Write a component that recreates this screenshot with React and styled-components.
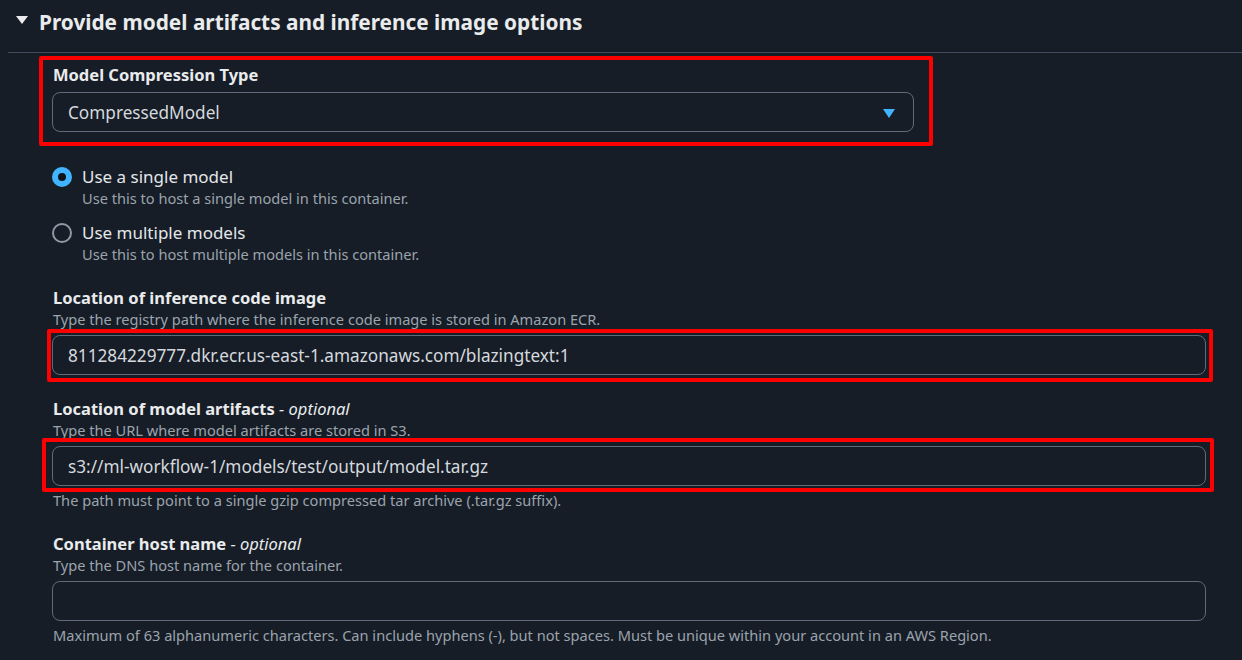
import React from "react";
import styled, { createGlobalStyle } from "styled-components";

const GlobalStyle = createGlobalStyle`
  body {
    margin: 0;
    background: #161d26;
    font-family: "Noto Sans", "Open Sans", sans-serif;
    color: #d1d5db;
  }
`;

const Page = styled.div`
  width: 1242px;
  height: 660px;
  overflow: hidden;
  background: #161d26;
`;

const Header = styled.div`
  display: flex;
  align-items: center;
  margin-left: 8px;
  padding: 8px 0 16px 8px;
  border-bottom: 1px solid #414d5c;
`;

const Caret = styled.span`
  width: 0;
  height: 0;
  margin: -4px 11px 0 0;
  border-left: 6px solid transparent;
  border-right: 6px solid transparent;
  border-top: 8px solid #e9ebed;
`;

const Title = styled.h2`
  margin: 0;
  font-size: 20.8px;
  line-height: 28px;
  font-weight: 700;
  color: #e9ebed;
`;

const Body = styled.div`
  display: flex;
  flex-direction: column;
  gap: 23px;
  width: 1154px;
  padding: 11px 0 0 52px;
`;

const Field = styled.div`
  position: relative;
  display: flex;
  flex-direction: column;
  width: ${(p) => p.$width || "100%"};
`;

const Label = styled.label`
  font-size: 16.5px;
  line-height: 22px;
  font-weight: 700;
  color: #e9ebed;
  padding-left: 1px;

  em {
    font-weight: 400;
    font-style: italic;
  }
`;

const Description = styled.div`
  font-size: 14.6px;
  line-height: 20px;
  color: #9ba3ad;
  padding-left: 1px;
`;

const Help = styled(Description)`
  margin-top: 4px;
`;

const Control = styled.div`
  position: relative;
  margin-top: 6px;
`;

const Input = styled.div`
  box-sizing: border-box;
  height: 40px;
  display: flex;
  align-items: center;
  justify-content: space-between;
  padding: 0 18px 0 15px;
  border: 1px solid #5f6b7a;
  border-radius: 8px;
  background: #161d26;
  font-size: 17.2px;
  color: #d5d9de;
`;

const SelectArrow = styled.span`
  width: 0;
  height: 0;
  margin-top: 2px;
  border-left: 6px solid transparent;
  border-right: 6px solid transparent;
  border-top: 9px solid #42b4ff;
`;

const Mark = styled.div`
  position: absolute;
  top: ${(p) => p.$t}px;
  left: ${(p) => p.$l}px;
  right: ${(p) => p.$r}px;
  bottom: ${(p) => p.$b}px;
  border: 4px solid #ff0000;
  border-radius: 2px;
  pointer-events: none;
`;

const RadioGroup = styled.div`
  display: flex;
  flex-direction: column;
  gap: 14px;
  margin-top: 34px;
`;

const RadioItem = styled.div`
  display: grid;
  grid-template-columns: 20px 1fr;
  column-gap: 10px;
  align-items: center;
`;

const RadioDot = styled.span`
  box-sizing: border-box;
  width: 20px;
  height: 20px;
  border-radius: 50%;
  border: ${(p) => (p.$checked ? "6px solid #42b4ff" : "2px solid #8d99a8")};
  background: ${(p) => (p.$checked ? "#0f141a" : "transparent")};
`;

const RadioLabel = styled.span`
  font-size: 17px;
  line-height: 22px;
  color: #e3e6ea;
`;

const RadioDescription = styled(Description)`
  grid-column: 2;
  padding-left: 0;
`;

function Radio({ checked, label, description }) {
  return (
    <RadioItem>
      <RadioDot $checked={checked} />
      <RadioLabel>{label}</RadioLabel>
      <RadioDescription>{description}</RadioDescription>
    </RadioItem>
  );
}

export default function App() {
  return (
    <Page>
      <GlobalStyle />
      <Header>
        <Caret />
        <Title>Provide model artifacts and inference image options</Title>
      </Header>
      <Body>
        <div>
          <Field $width="862px">
            <Label>Model Compression Type</Label>
            <Control>
              <Input>
                CompressedModel
                <SelectArrow />
              </Input>
            </Control>
            <Mark $t={-8} $l={-13} $r={-19} $b={-14} />
          </Field>
          <RadioGroup>
            <Radio
              checked
              label="Use a single model"
              description="Use this to host a single model in this container."
            />
            <Radio
              label="Use multiple models"
              description="Use this to host multiple models in this container."
            />
          </RadioGroup>
        </div>

        <Field>
          <Label>Location of inference code image</Label>
          <Description>
            Type the registry path where the inference code image is stored in Amazon ECR.
          </Description>
          <Control>
            <Input>811284229777.dkr.ecr.us-east-1.amazonaws.com/blazingtext:1</Input>
            <Mark $t={-6} $l={-5} $r={-7} $b={-7} />
          </Control>
        </Field>

        <Field>
          <Label>
            Location of model artifacts <em>- optional</em>
          </Label>
          <Description>Type the URL where model artifacts are stored in S3.</Description>
          <Control>
            <Input>s3://ml-workflow-1/models/test/output/model.tar.gz</Input>
            <Mark $t={-8} $l={-10} $r={-8} $b={-6} />
          </Control>
          <Help>The path must point to a single gzip compressed tar archive (.tar.gz suffix).</Help>
        </Field>

        <Field>
          <Label>
            Container host name <em>- optional</em>
          </Label>
          <Description>Type the DNS host name for the container.</Description>
          <Control>
            <Input />
          </Control>
          <Help>
            Maximum of 63 alphanumeric characters. Can include hyphens (-), but not spaces. Must be
            unique within your account in an AWS Region.
          </Help>
        </Field>
      </Body>
    </Page>
  );
}
